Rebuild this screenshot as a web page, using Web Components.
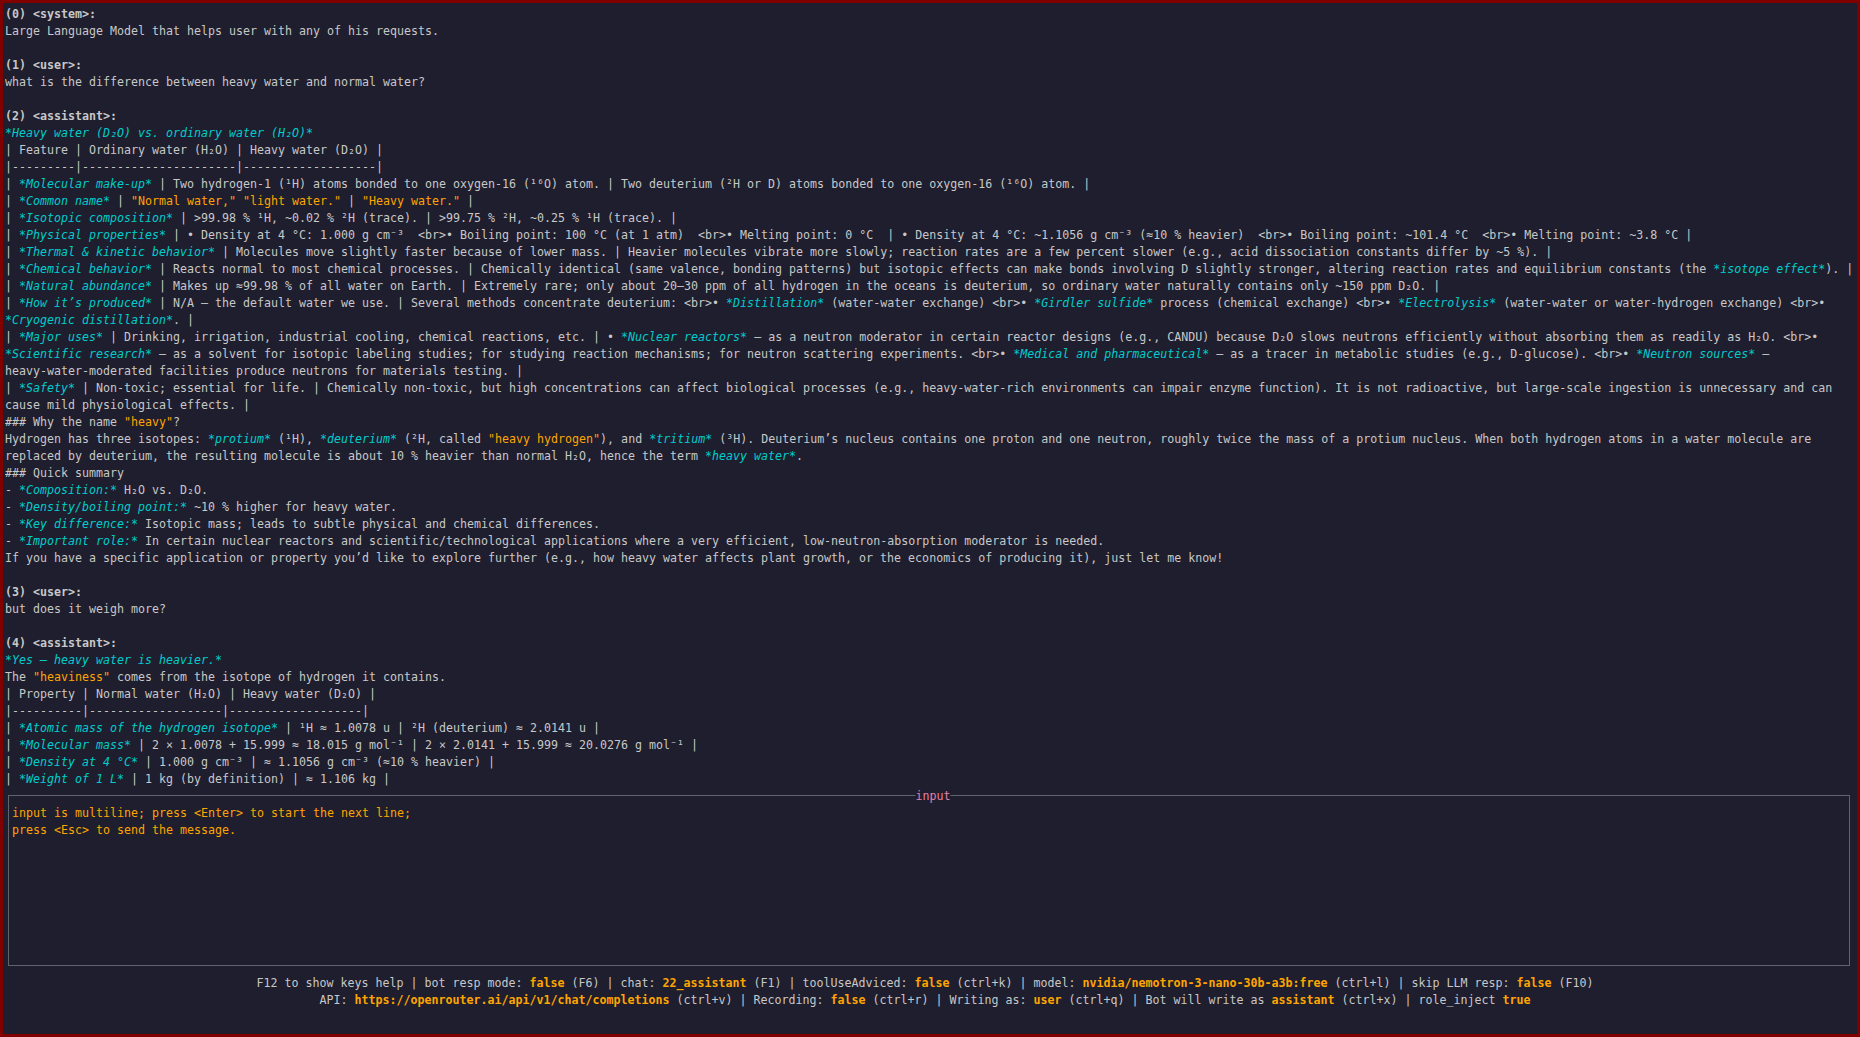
<!DOCTYPE html>
<html>
<head>
<meta charset="utf-8">
<title>chat</title>
<style>
  html, body { margin: 0; height: 100%; background: #1e1e2e; overflow: hidden; }
</style>
</head>
<body>
<term-app>
  <chat-log>
    <t-line><t-b>(0) &lt;system&gt;:</t-b></t-line>
    <t-line>Large Language Model that helps user with any of his requests.</t-line>
    <t-line></t-line>
    <t-line><t-b>(1) &lt;user&gt;:</t-b></t-line>
    <t-line>what is the difference between heavy water and normal water?</t-line>
    <t-line></t-line>
    <t-line><t-b>(2) &lt;assistant&gt;:</t-b></t-line>
    <t-line><t-em>*Heavy water (D₂O) vs. ordinary water (H₂O)*</t-em></t-line>
    <t-line>| Feature | Ordinary water (H₂O) | Heavy water (D₂O) |</t-line>
    <t-line>|---------|----------------------|-------------------|</t-line>
    <t-line>| <t-em>*Molecular make-up*</t-em> | Two hydrogen-1 (¹H) atoms bonded to one oxygen-16 (¹⁶O) atom. | Two deuterium (²H or D) atoms bonded to one oxygen-16 (¹⁶O) atom. |</t-line>
    <t-line>| <t-em>*Common name*</t-em> | <t-q>"Normal water," "light water."</t-q> | <t-q>"Heavy water."</t-q> |</t-line>
    <t-line>| <t-em>*Isotopic composition*</t-em> | &gt;99.98 % ¹H, ~0.02 % ²H (trace). | &gt;99.75 % ²H, ~0.25 % ¹H (trace). |</t-line>
    <t-line>| <t-em>*Physical properties*</t-em> | • Density at 4 °C: 1.000 g cm⁻³  &lt;br&gt;• Boiling point: 100 °C (at 1 atm)  &lt;br&gt;• Melting point: 0 °C  | • Density at 4 °C: ~1.1056 g cm⁻³ (≈10 % heavier)  &lt;br&gt;• Boiling point: ~101.4 °C  &lt;br&gt;• Melting point: ~3.8 °C |</t-line>
    <t-line>| <t-em>*Thermal &amp; kinetic behavior*</t-em> | Molecules move slightly faster because of lower mass. | Heavier molecules vibrate more slowly; reaction rates are a few percent slower (e.g., acid dissociation constants differ by ~5 %). |</t-line>
    <t-line>| <t-em>*Chemical behavior*</t-em> | Reacts normal to most chemical processes. | Chemically identical (same valence, bonding patterns) but isotopic effects can make bonds involving D slightly stronger, altering reaction rates and equilibrium constants (the <t-em>*isotope effect*</t-em>). |</t-line>
    <t-line>| <t-em>*Natural abundance*</t-em> | Makes up ≈99.98 % of all water on Earth. | Extremely rare; only about 20–30 ppm of all hydrogen in the oceans is deuterium, so ordinary water naturally contains only ~150 ppm D₂O. |</t-line>
    <t-line>| <t-em>*How it’s produced*</t-em> | N/A – the default water we use. | Several methods concentrate deuterium: &lt;br&gt;• <t-em>*Distillation*</t-em> (water-water exchange) &lt;br&gt;• <t-em>*Girdler sulfide*</t-em> process (chemical exchange) &lt;br&gt;• <t-em>*Electrolysis*</t-em> (water-water or water-hydrogen exchange) &lt;br&gt;•</t-line>
    <t-line><t-em>*Cryogenic distillation*</t-em>. |</t-line>
    <t-line>| <t-em>*Major uses*</t-em> | Drinking, irrigation, industrial cooling, chemical reactions, etc. | • <t-em>*Nuclear reactors*</t-em> – as a neutron moderator in certain reactor designs (e.g., CANDU) because D₂O slows neutrons efficiently without absorbing them as readily as H₂O. &lt;br&gt;•</t-line>
    <t-line><t-em>*Scientific research*</t-em> – as a solvent for isotopic labeling studies; for studying reaction mechanisms; for neutron scattering experiments. &lt;br&gt;• <t-em>*Medical and pharmaceutical*</t-em> – as a tracer in metabolic studies (e.g., D-glucose). &lt;br&gt;• <t-em>*Neutron sources*</t-em> –</t-line>
    <t-line>heavy-water-moderated facilities produce neutrons for materials testing. |</t-line>
    <t-line>| <t-em>*Safety*</t-em> | Non-toxic; essential for life. | Chemically non-toxic, but high concentrations can affect biological processes (e.g., heavy-water-rich environments can impair enzyme function). It is not radioactive, but large-scale ingestion is unnecessary and can</t-line>
    <t-line>cause mild physiological effects. |</t-line>
    <t-line>### Why the name <t-q>"heavy"</t-q>?</t-line>
    <t-line>Hydrogen has three isotopes: <t-em>*protium*</t-em> (¹H), <t-em>*deuterium*</t-em> (²H, called <t-q>"heavy hydrogen"</t-q>), and <t-em>*tritium*</t-em> (³H). Deuterium’s nucleus contains one proton and one neutron, roughly twice the mass of a protium nucleus. When both hydrogen atoms in a water molecule are</t-line>
    <t-line>replaced by deuterium, the resulting molecule is about 10 % heavier than normal H₂O, hence the term <t-em>*heavy water*</t-em>.</t-line>
    <t-line>### Quick summary</t-line>
    <t-line>- <t-em>*Composition:*</t-em> H₂O vs. D₂O.</t-line>
    <t-line>- <t-em>*Density/boiling point:*</t-em> ~10 % higher for heavy water.</t-line>
    <t-line>- <t-em>*Key difference:*</t-em> Isotopic mass; leads to subtle physical and chemical differences.</t-line>
    <t-line>- <t-em>*Important role:*</t-em> In certain nuclear reactors and scientific/technological applications where a very efficient, low-neutron-absorption moderator is needed.</t-line>
    <t-line>If you have a specific application or property you’d like to explore further (e.g., how heavy water affects plant growth, or the economics of producing it), just let me know!</t-line>
    <t-line></t-line>
    <t-line><t-b>(3) &lt;user&gt;:</t-b></t-line>
    <t-line>but does it weigh more?</t-line>
    <t-line></t-line>
    <t-line><t-b>(4) &lt;assistant&gt;:</t-b></t-line>
    <t-line><t-em>*Yes – heavy water is heavier.*</t-em></t-line>
    <t-line>The <t-q>"heaviness"</t-q> comes from the isotope of hydrogen it contains.</t-line>
    <t-line>| Property | Normal water (H₂O) | Heavy water (D₂O) |</t-line>
    <t-line>|----------|-------------------|-------------------|</t-line>
    <t-line>| <t-em>*Atomic mass of the hydrogen isotope*</t-em> | ¹H ≈ 1.0078 u | ²H (deuterium) ≈ 2.0141 u |</t-line>
    <t-line>| <t-em>*Molecular mass*</t-em> | 2 × 1.0078 + 15.999 ≈ 18.015 g mol⁻¹ | 2 × 2.0141 + 15.999 ≈ 20.0276 g mol⁻¹ |</t-line>
    <t-line>| <t-em>*Density at 4 °C*</t-em> | 1.000 g cm⁻³ | ≈ 1.1056 g cm⁻³ (≈10 % heavier) |</t-line>
    <t-line>| <t-em>*Weight of 1 L*</t-em> | 1 kg (by definition) | ≈ 1.106 kg |</t-line>
  </chat-log>
  <input-box>
    <t-line><t-q>input is multiline; press &lt;Enter&gt; to start the next line;</t-q></t-line>
    <t-line><t-q>press &lt;Esc&gt; to send the message.</t-q></t-line>
  </input-box>
  <status-bar>
    <t-line center>F12 to show keys help | bot resp mode: <t-val>false</t-val> (F6) | chat: <t-val>22_assistant</t-val> (F1) | toolUseAdviced: <t-val>false</t-val> (ctrl+k) | model: <t-val>nvidia/nemotron-3-nano-30b-a3b:free</t-val> (ctrl+l) | skip LLM resp: <t-val>false</t-val> (F10)</t-line>
    <t-line center>API: <t-val>https://openrouter.ai/api/v1/chat/completions</t-val> (ctrl+v) | Recording: <t-val>false</t-val> (ctrl+r) | Writing as: <t-val>user</t-val> (ctrl+q) | Bot will write as <t-val>assistant</t-val> (ctrl+x) | role_inject <t-val>true</t-val></t-line>
  </status-bar>
</term-app>
<script>
// every piece of markup + style lives in the element's own shadow root
// (no whitespace around the slot: t-line is white-space: pre)
function shadow(el, css, html) {
    el.attachShadow({ mode: 'open' }).innerHTML = `<style>${css}</style>${html || '<slot></slot>'}`;
}

class TermApp extends HTMLElement {
    constructor() {
        super();
        shadow(this, `
            :host {
                display: grid;
                grid-template-rows: 1fr auto auto;
                box-sizing: border-box;
                height: 1037px;
                border: 3px solid #800000;
                background: #1e1e2e;
                color: #c8c8c8;
                font-family: "DejaVu Sans Mono", monospace;
                font-size: 13px;
                /* the terminal cell is 7px wide, t-line squeezes DejaVu down to it */
                --cell-scale: 0.8945;
                overflow: hidden;
            }
        `);
    }
}

class ChatLog extends HTMLElement {
    constructor() {
        super();
        shadow(this, `:host { display: block; min-height: 0; overflow: hidden; padding: 2px 0 0 2px; }`);
    }
}

class InputBox extends HTMLElement {
    constructor() {
        super();
        shadow(this, `
            :host {
                display: block;
                position: relative;
                box-sizing: border-box;
                height: 171px;
                margin: 0 7px 0 5px;
                padding: 8px 3px;
                border: 1px solid #62626f;
            }
            .title {
                position: absolute;
                top: -9px;
                left: calc(50% + 4px);
                transform: translateX(-50%) scaleX(var(--cell-scale));
                line-height: 17px;
                background: #1e1e2e;
                color: #e87ea8;
            }
        `, `<span class="title">input</span><slot></slot>`);
    }
}

class StatusBar extends HTMLElement {
    constructor() {
        super();
        shadow(this, `:host { display: block; height: 68px; box-sizing: border-box; padding: 8px 10px 0 0; }`);
    }
}

class TLine extends HTMLElement {
    constructor() {
        super();
        shadow(this, `
            :host {
                display: block;
                height: 17px;
                line-height: 17px;
                white-space: pre;
                transform: scaleX(var(--cell-scale));
                transform-origin: 0 0;
            }
            :host([center]) { text-align: center; transform-origin: 50% 0; }
        `);
    }
}

class TEm extends HTMLElement {
    constructor() {
        super();
        shadow(this, `:host { color: #00cdcd; font-style: italic; }`);
    }
}

class TQ extends HTMLElement {
    constructor() {
        super();
        shadow(this, `:host { color: #ffa500; }`);
    }
}

class TB extends HTMLElement {
    constructor() {
        super();
        shadow(this, `:host { font-weight: bold; }`);
    }
}

class TVal extends HTMLElement {
    constructor() {
        super();
        shadow(this, `:host { color: #ffa500; font-weight: bold; }`);
    }
}

customElements.define('term-app', TermApp);
customElements.define('chat-log', ChatLog);
customElements.define('input-box', InputBox);
customElements.define('status-bar', StatusBar);
customElements.define('t-line', TLine);
customElements.define('t-em', TEm);
customElements.define('t-q', TQ);
customElements.define('t-b', TB);
customElements.define('t-val', TVal);
</script>
</body>
</html>
